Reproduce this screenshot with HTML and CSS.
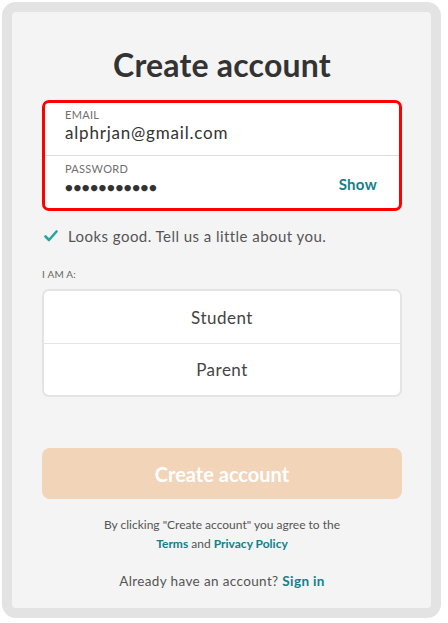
FILE: index.html
```html
<!DOCTYPE html>
<html>
<head>
<meta charset="utf-8">
<link rel="stylesheet" href="styles.css">
</head>
<body>
<div class="frame">
  <div class="card">
    <h1 class="title">Create account</h1>
    <div class="fields">
      <div class="field">
        <div class="label">EMAIL</div>
        <div class="value">alphrjan@gmail.com</div>
      </div>
      <div class="field field-pass">
        <div class="pass-col">
          <div class="label">PASSWORD</div>
          <div class="value dots">●●●●●●●●●●●</div>
        </div>
        <span class="show">Show</span>
      </div>
    </div>
    <div class="ok">
      <svg class="check" width="14" height="12" viewBox="0 0 14 12"><path d="M1.5 6.5 L5 10 L12.5 1.5" fill="none" stroke="#27a79c" stroke-width="2.6" stroke-linecap="round" stroke-linejoin="round"/></svg>
      <span>Looks good. Tell us a little about you.</span>
    </div>
    <div class="iam">I AM A:</div>
    <div class="options">
      <div class="option">Student</div>
      <div class="option">Parent</div>
    </div>
    <div class="btn">Create account</div>
    <p class="terms">By clicking "Create account" you agree to the<br><a class="link">Terms</a> and <a class="link">Privacy Policy</a></p>
    <p class="signin">Already have an account? <a class="link">Sign in</a></p>
  </div>
</div>
</body>
</html>
```
FILE: styles.css
```css
* { box-sizing: border-box; }
html, body { margin: 0; padding: 0; background: #ffffff; }
body { font-family: Lato, "Open Sans", sans-serif; color: #333; }
.frame {
  margin: 2px;
  width: 439px;
  height: 616px;
  border: 10px solid #e3e3e3;
  border-radius: 14px;
  background: #f4f4f4;
}
.card {
  padding: 34px 29px 0 30px;
  display: flex;
  flex-direction: column;
}
.title {
  margin: 0;
  font-size: 32px;
  font-weight: 700;
  color: #333;
  text-align: center;
  line-height: 38px;
  letter-spacing: 0.2px;
}
.fields {
  margin-top: 16px;
  border: 3px solid #ff0000;
  border-radius: 7px;
  background: #fff;
}
.field {
  height: 52px;
  padding: 6px 20px 0 20px;
}
.field:first-child { padding-top: 5px; }
.field + .field { border-top: 1px solid #dddddd; height: 53px; }
.field-pass {
  display: flex;
  justify-content: space-between;
  align-items: flex-start;
  padding-right: 22px;
}
.label {
  font-size: 11px;
  color: #6f6f6f;
  line-height: 14px;
  letter-spacing: 0.3px;
}
.value {
  font-size: 17px;
  color: #333;
  line-height: 22px;
  margin-top: 0;
  letter-spacing: 0.8px;
}
.dots {
  font-size: 13px;
  letter-spacing: 0.6px;
  line-height: 20px;
  margin-top: 1px;
}
.show {
  margin-top: 13px;
  font-size: 15px;
  font-weight: 700;
  color: #11808a;
  letter-spacing: 0.3px;
}
.ok {
  margin-top: 15px;
  display: flex;
  align-items: center;
  gap: 10px;
  padding-left: 2px;
  font-size: 15px;
  color: #555;
  line-height: 20px;
  letter-spacing: 0.45px;
}
.iam {
  margin-top: 21px;
  font-size: 10px;
  color: #666;
  line-height: 14px;
  letter-spacing: 0.2px;
}
.options {
  margin-top: 8px;
  border: 2px solid #e4e4e4;
  border-radius: 7px;
  background: #fff;
}
.option {
  height: 52px;
  display: flex;
  align-items: center;
  justify-content: center;
  font-size: 17px;
  color: #444;
  letter-spacing: 0.5px;
}
.option + .option { border-top: 1px solid #e4e4e4; }
.btn {
  margin-top: 51px;
  height: 51px;
  border-radius: 8px;
  background: #f2d4b8;
  color: #fff;
  font-size: 20px;
  font-weight: 700;
  display: flex;
  align-items: center;
  justify-content: center;
}
.terms {
  margin: 16px 0 0;
  text-align: center;
  font-size: 12px;
  line-height: 19px;
  color: #555;
}
.link { color: #11808a; font-weight: 700; text-decoration: none; }
.signin {
  margin: 18px 0 0;
  text-align: center;
  font-size: 13.5px;
  color: #555;
  line-height: 20px;
  letter-spacing: 0.37px;
}
```
